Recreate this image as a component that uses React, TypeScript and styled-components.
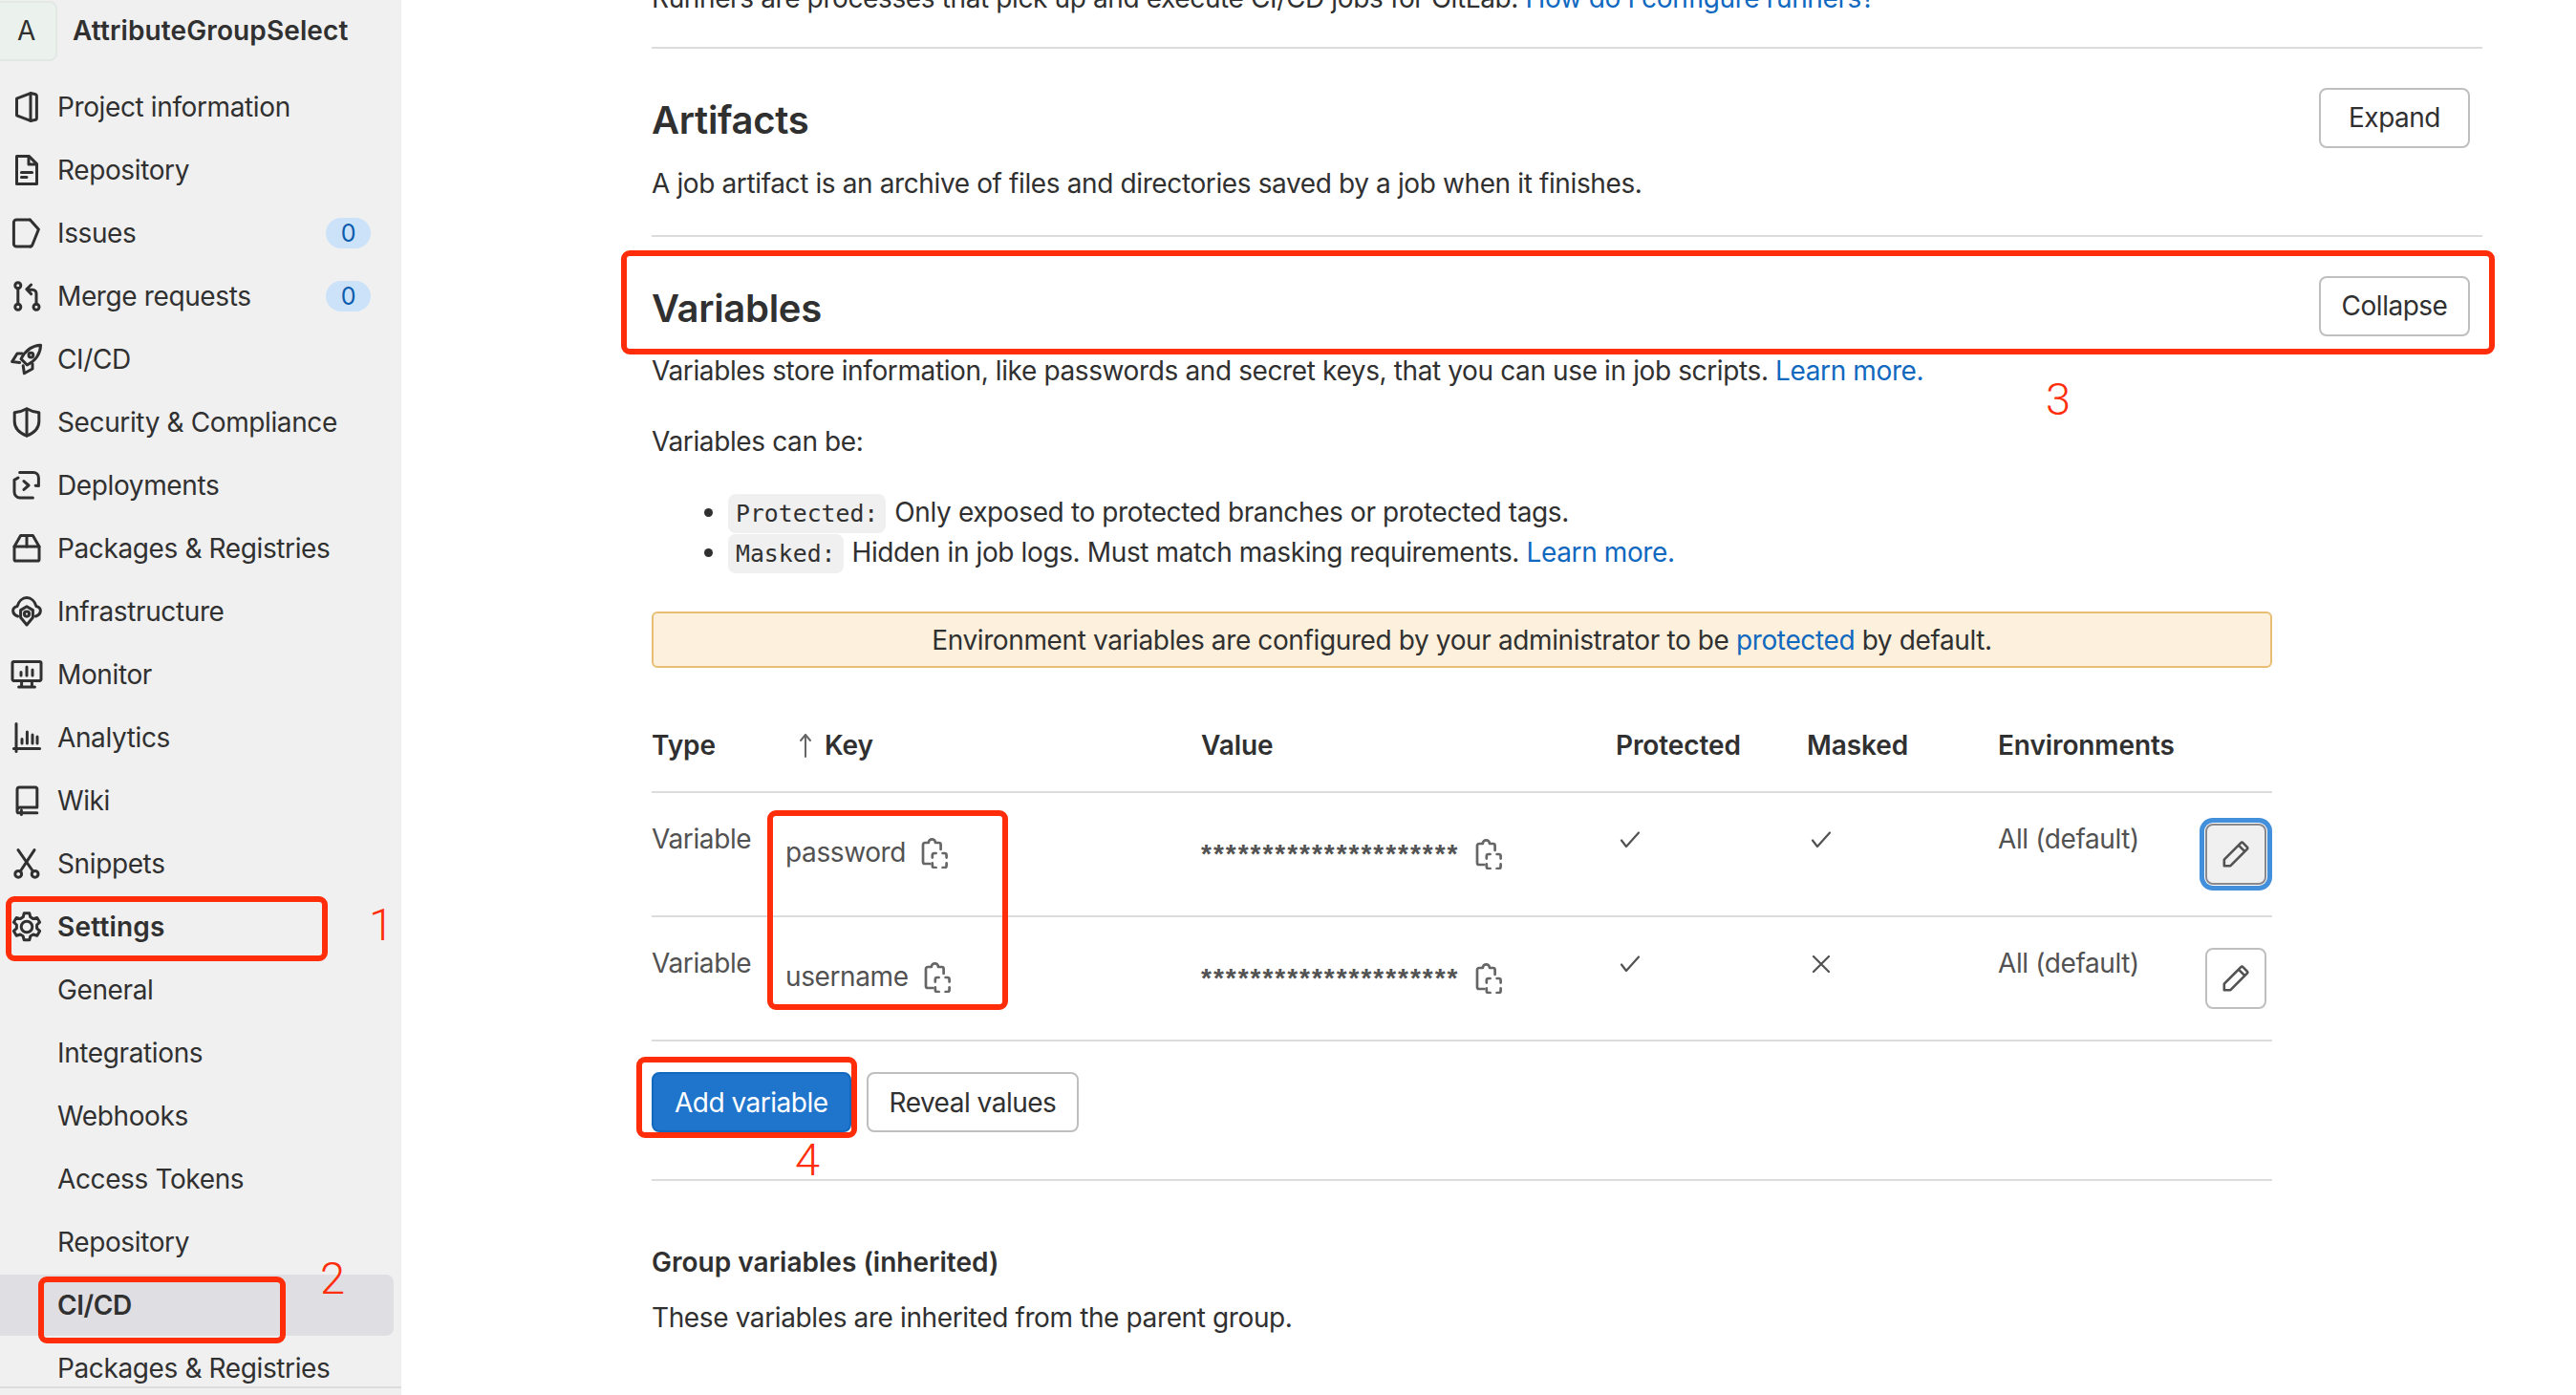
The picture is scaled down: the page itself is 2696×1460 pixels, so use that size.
import React from "react";
import styled, { createGlobalStyle } from "styled-components";

const Global = createGlobalStyle`
  html, body { margin: 0; padding: 0; background: #fff; }
  body { font-family: Inter, "Liberation Sans", sans-serif; color: #303030; font-size: 28px; letter-spacing: -0.38px; }
  * { box-sizing: border-box; }
`;

const Page = styled.div`
  position: relative; display: flex; width: 2696px; height: 1460px; overflow: hidden; background: #fff;
`;
const Sidebar = styled.aside`
  position: relative; flex: 0 0 420px; height: 1460px; overflow: hidden; background: #f0f0f0; line-height: 40px;
`;
const ProjectHeader = styled.div`
  display: flex; align-items: center; gap: 16px; height: 79px; padding-bottom: 15px;
`;
const Avatar = styled.div`
  display: flex; align-items: center; justify-content: center; width: 60px; height: 63px; padding-right: 3px;
  background: #ebf2ee; border: 2px solid #e2e8e4; border-left: 0; border-radius: 0 8px 8px 0; color: #303030;
`;
const ProjectName = styled.div`font-weight: 600; letter-spacing: 0.12px;`;
const NavItem = styled.div<{ $bold?: boolean }>`
  display: flex; align-items: center; height: 66px; padding: 0 32px 0 12px; gap: 16px;
  font-weight: ${(p) => (p.$bold ? 600 : 400)};
  letter-spacing: ${(p) => (p.$bold ? "0.2px" : "inherit")};
`;
const SubItem = styled.div<{ $active?: boolean }>`
  display: flex; align-items: center; height: ${(p) => (p.$active ? "64px" : "66px")};
  margin: ${(p) => (p.$active ? "1px 8px 1px 0" : "0")}; padding-left: 60px; border-radius: 0 8px 8px 0;
  background: ${(p) => (p.$active ? "#dfdee2" : "transparent")};
  font-weight: ${(p) => (p.$active ? 600 : 400)};
`;
const Badge = styled.span`
  margin-left: auto; width: 47px; height: 32px; border-radius: 16px; background: #cbe2f9; color: #0b5cad;
  display: flex; align-items: center; justify-content: center; font-size: 25px;
`;
const NavIcon = styled.svg`
  flex: 0 0 32px; width: 32px; height: 32px; fill: none; stroke: #303030; stroke-width: 1.5;
  stroke-linecap: round; stroke-linejoin: round; overflow: visible;
`;
const SidebarFoot = styled.div`
  position: absolute; left: 0; right: 0; bottom: 0; height: 9px; background: #f0f0f0; border-top: 2px solid #dcdcde;
`;
const Main = styled.main`
  flex: 1; min-width: 0; margin-top: -22px; padding-left: 262px; line-height: 40px;
`;
const Section = styled.section`
  width: 1916px; border-bottom: 2px solid #dcdcde;
`;
const ClippedIntro = styled(Section)`padding-bottom: 31px;`;
const Settings = styled(Section)`
  padding: 41px 0 34px;
`;
const Open = styled.section`
  width: 1916px; padding-top: 41px;
`;
const SectionHead = styled.div`
  display: flex; align-items: center; justify-content: space-between; padding-right: 13px; height: 62px;
`;
const Heading = styled.h4`
  margin: 0; font-size: 40px; font-weight: 600; letter-spacing: -0.3px; line-height: 48px; padding-top: 6px;
`;
const Para = styled.p<{ $top?: number }>`
  margin: ${(p) => p.$top ?? 18}px 0 0;
`;
const Link = styled.a`color: #1068bf;`;
const Button = styled.button<{ $primary?: boolean }>`
  display: inline-flex; align-items: center; justify-content: center; height: 63px;
  padding: 0 22px; font: inherit; letter-spacing: -0.5px;
  border-radius: 8px; border: 2px solid ${(p) => (p.$primary ? "#1068bf" : "#bfbfbf")};
  background: ${(p) => (p.$primary ? "#1f75cb" : "#fff")};
  color: ${(p) => (p.$primary ? "#fff" : "#303030")};
`;
const HeadButton = styled(Button)`width: 158px; padding: 0;`;
const Bullets = styled.ul`
  margin: 33px 0 0; padding: 0 0 0 80px; width: 1696px;
`;
const Bullet = styled.li`
  height: 42px; line-height: 42px;
`;
const Code = styled.code`
  font-family: "DejaVu Sans Mono", "Liberation Mono", monospace; font-size: 24.8px; letter-spacing: 0;
  background: #f0f0f0; border-radius: 8px; padding: 6px 8px; margin-right: 9px;
`;
const Alert = styled.div`
  width: 1696px; height: 59px; margin-top: 41px; display: flex; align-items: center; justify-content: center;
  background: #fdf1dd; border: 2px solid #e9be74; border-radius: 6px; 
`;
const Table = styled.div`width: 1696px; margin-top: 50px;`;
const Row = styled.div<{ $head?: boolean }>`
  display: grid; grid-template-columns: 140px 435px 434px 200px 200px 287px; align-items: start;
  height: ${(p) => (p.$head ? "81px" : "130px")}; border-bottom: 2px solid #dcdcde;
  color: ${(p) => (p.$head ? "#303030" : "#525252")};
  font-weight: ${(p) => (p.$head ? 600 : 400)};
  letter-spacing: ${(p) => (p.$head ? "-0.1px" : "inherit")};
  padding-top: ${(p) => (p.$head ? "11px" : "0")};
`;
const KeyHead = styled.div`display: flex; align-items: center; gap: 13px; padding-left: 14px;`;
const TextCell = styled.div`padding-top: 28px;`;
const CopyCell = styled.div<{ $value?: boolean }>`
  display: flex; align-items: ${(p) => (p.$value ? "flex-start" : "center")}; gap: ${(p) => (p.$value ? "16px" : "15px")};
  padding-top: ${(p) => (p.$value ? "48px" : "44px")};
`;
const KeyName = styled.span`margin-top: -2px;`;
const Stars = styled.span`
  font-family: "Liberation Sans", sans-serif; font-size: 28px; font-weight: 700; letter-spacing: 1.98px; line-height: 32px;
`;
const FlagCell = styled.div`padding: 40px 0 0 4px; line-height: 0;`;
const EnvCell = styled.div`display: flex; justify-content: space-between; padding: 28px 6px 0 0;`;
const EditButton = styled.button<{ $focus?: boolean }>`
  display: flex; align-items: center; justify-content: center; width: 64px; height: 64px; margin-top: 4px; padding: 0;
  border-radius: 8px; border: 2px solid ${(p) => (p.$focus ? "#89888d" : "#bfbfbf")};
  background: ${(p) => (p.$focus ? "#f0f0f0" : "#fff")};
  box-shadow: ${(p) => (p.$focus ? "0 0 0 1px #fff, 0 0 0 6px #428fdc" : "none")};
`;
const Actions = styled.div`
  display: flex; gap: 16px; width: 1696px; padding: 32px 0 49px; border-bottom: 2px solid #dcdcde;
`;
const SubHead = styled.div`margin-top: 65px; font-weight: 600; letter-spacing: 0.02px;`;
const RedBox = styled.div<{ $x: number; $y: number; $w: number; $h: number }>`
  position: absolute; left: ${(p) => p.$x}px; top: ${(p) => p.$y}px; width: ${(p) => p.$w}px; height: ${(p) => p.$h}px;
  border: 6px solid #ff2d0a; border-radius: 9px; pointer-events: none;
`;
const RedNum = styled.div<{ $x: number; $y: number }>`
  position: absolute; left: ${(p) => p.$x}px; top: ${(p) => p.$y}px; transform: translate(-50%, -50%);
  font-family: Roboto, "Liberation Sans", sans-serif; font-weight: 300; font-size: 47px; line-height: 47px; letter-spacing: 0; color: #ff2d0a;
`;
const GlyphIcon = styled.svg<{ $c?: string }>`
  fill: none; stroke: ${(p) => p.$c ?? "#525252"}; stroke-linecap: round; stroke-linejoin: round; display: block; flex: none;
`;

const I: React.FC<{ children: React.ReactNode }> = ({ children }) => <NavIcon viewBox="0 0 16 16">{children}</NavIcon>;

const icons: Record<string, React.ReactNode> = {
  info: <><path d="M2.750 3.600 10 .8l2.200.4a1.200 1.200 0 0 1 1 1.200v11.200a1.200 1.200 0 0 1-1 1.200l-2.200.4-7.250-2.800z" /><path d="M10 .9v14.200" /></>,
  repo: <><path d="M2.750.8h6.500l4 4v10.400H2.750z" /><path d="M9 1v4h4M5.200 9.200h5.600M5.200 11.800h2.800" /></>,
  issues: <><path d="M9.700 1H2.600A1.400 1.400 0 0 0 1.200 2.400v11.200A1.400 1.400 0 0 0 2.600 15h7.400" /><path d="M9.700 1 14.200 6 11 14a1.500 1.500 0 0 1-1 1" /></>,
  merge: <><circle cx="3.400" cy="2.400" r="1.500" /><circle cx="3.400" cy="13.600" r="1.500" /><circle cx="13" cy="13.600" r="1.500" /><path d="M3.400 3.900v8.200M13 12.100V6.600a2 2 0 0 0-2-2H8.400M10.300 2 7.900 4.400l2.400 2.400" /></>,
  rocket: <><path d="M15.300.6C10.500.8 7.400 3.200 5 7.800l3.200 3.200c4.600-2.400 6.900-5.600 7.100-10.400z" /><circle cx="10.200" cy="5.800" r="1.200" /><path d="M5.600 5H3L.3 9.300l4 .5M11 10.400V13l-4.300 2.400-.6-4" /></>,
  shield: <><path d="M8 .9c2 1.200 4.200 1.800 6.400 2v4.600c0 3.400-2.400 6-6.400 7.600-4-1.600-6.400-4.200-6.400-7.600V2.900C3.800 2.700 6 2.100 8 .9z" /><path d="M8 1v14" /></>,
  deploy: <><path d="M4.300 1.300h7.200a2.700 2.700 0 0 1 2.700 2.700v4.300M14.200 8.300l-1.600-.2M1.500 5.200v6.300a3 3 0 0 0 3 3h6.700M1.500 5.200l2-1.200M6.500 5.800 9 8l-2.500 2.200" /></>,
  pkg: <><path d="M1.500 7h13v6.700a.8.8 0 0 1-.8.8H2.300a.8.8 0 0 1-.8-.8z" /><path d="M1.500 7 4.800 1.300h6.400L14.500 7M8 1.300V7" /></>,
  infra: <><path d="M3.300 10.500C.1 9.400 0 5.900 3 5.300 3.800 2.500 5.800.8 8 .8s4.200 1.700 5 4.500c3 .6 2.900 4.100-.3 5.200" /><path d="M8 5.400l3.200 1.900v3.800L8 15l-3.200-3.900V7.300z" /><circle cx="8" cy="9.300" r="1.300" /></>,
  monitor: <><rect x=".5" y="1.200" width="15" height="10" rx=".8" /><path d="M5 8.500V6.800M8 8.500V4M11 8.500V5.500M5.300 11.500v2.500M10.700 11.500v2.500M3.800 14.500h8.400" /></>,
  analytics: <><path d="M2.500 .8v14.400M1.200 13.700h13.600M5.500 11V8.800M8.200 11V5M11 11V6.500M13.500 11V7.500" /></>,
  wiki: <><path d="M3 13V2.200A1.200 1.200 0 0 1 4.200 1h8.400a.8.800 0 0 1 .8.8V11.500H4.500A1.500 1.500 0 0 0 3 13v.6a.8.800 0 0 0 .8.800h9.600M5.200 13v2.200" /></>,
  snip: <><circle cx="3.600" cy="13.400" r="1.700" /><circle cx="12.300" cy="13.400" r="1.700" /><path d="M3.500.8 11.300 12M12 .8 4.600 12" /></>,
  gear: <><path d="M6.600.9h2.800l.5 2 1.500.9 2-.6 1.400 2.400-1.500 1.400v1.800l1.500 1.400-1.400 2.400-2-.6-1.500.9-.5 2H6.600l-.5-2-1.500-.9-2 .6-1.400-2.400 1.500-1.400V7L1.200 5.600l1.400-2.400 2 .6 1.500-.9z" /><circle cx="8" cy="8" r="2.900" /></>,
};

const Copy = () => (
  <GlyphIcon $c="#666" width="32" height="32" viewBox="0 0 16 16" strokeWidth={1.35}>
    <path d="M5.200 13.500H2.500a1 1 0 0 1-1-1V3.500a1 1 0 0 1 1-1h1.900c0-2.400 3.600-2.400 3.600 0h1.800a1 1 0 0 1 1 1V6" />
    <path d="M6.400 10.300V9a1 1 0 0 1 1-1h.9M11.800 8h1a1 1 0 0 1 1 1v1.300M13.800 13.200v1.300a1 1 0 0 1-1 1h-1M8.300 15.500h-.9a1 1 0 0 1-1-1v-1.300" />
  </GlyphIcon>
);
const Check = () => (
  <GlyphIcon width="22" height="18" viewBox="0 0 22 18" strokeWidth={2.2}>
    <path d="M2 9.500 7 16 20 1.500" />
  </GlyphIcon>
);
const Cross = () => (
  <GlyphIcon width="22" height="18" viewBox="0 0 22 18" strokeWidth={2.2}>
    <path d="M3 1l16 16M19 1 3 17" />
  </GlyphIcon>
);
const Pencil = () => (
  <GlyphIcon width="30" height="30" viewBox="0 0 16 16" strokeWidth={1.4}>
    <path d="M1.500 14.500V11L10.700 1.800a1 1 0 0 1 1.400 0l2.100 2.100a1 1 0 0 1 0 1.400L5 14.500zM9.500 3l3.500 3.500" />
  </GlyphIcon>
);
const SortUp = () => (
  <GlyphIcon $c="#666" width="14" height="26" viewBox="0 0 14 26" strokeWidth={2}>
    <path d="M7 25V2M2 8l5-6 5 6" />
  </GlyphIcon>
);

const nav: [string, string, boolean?][] = [
  ["Project information", "info"],
  ["Repository", "repo"],
  ["Issues", "issues", true],
  ["Merge requests", "merge", true],
  ["CI/CD", "rocket"],
  ["Security & Compliance", "shield"],
  ["Deployments", "deploy"],
  ["Packages & Registries", "pkg"],
  ["Infrastructure", "infra"],
  ["Monitor", "monitor"],
  ["Analytics", "analytics"],
  ["Wiki", "wiki"],
  ["Snippets", "snip"],
];
const sub = ["General", "Integrations", "Webhooks", "Access Tokens", "Repository", "CI/CD", "Packages & Registries"];

const rows = [
  { key: "password", masked: true, focus: true },
  { key: "username", masked: false, focus: false },
];

export default function App() {
  return (
    <Page>
      <Global />
      <Sidebar>
        <ProjectHeader>
          <Avatar>A</Avatar>
          <ProjectName>AttributeGroupSelect</ProjectName>
        </ProjectHeader>
        {nav.map(([label, icon, badge]) => (
          <NavItem key={label}>
            <I>{icons[icon]}</I>
            {label}
            {badge && <Badge>0</Badge>}
          </NavItem>
        ))}
        <NavItem $bold>
          <I>{icons.gear}</I>
          Settings
        </NavItem>
        {sub.map((s) => (
          <SubItem key={s} $active={s === "CI/CD"}>{s}</SubItem>
        ))}
        <SidebarFoot />
      </Sidebar>
      <Main>
        <ClippedIntro>
          Runners are processes that pick up and execute CI/CD jobs for GitLab. <Link>How do I configure runners?</Link>
        </ClippedIntro>
        <Settings>
          <SectionHead>
            <Heading>Artifacts</Heading>
            <HeadButton>Expand</HeadButton>
          </SectionHead>
          <Para>A job artifact is an archive of files and directories saved by a job when it finishes.</Para>
        </Settings>
        <Open>
          <SectionHead>
            <Heading>Variables</Heading>
            <HeadButton>Collapse</HeadButton>
          </SectionHead>
          <Para $top={17}>
            Variables store information, like passwords and secret keys, that you can use in job scripts. <Link>Learn more.</Link>
          </Para>
          <Para $top={34}>Variables can be:</Para>
          <Bullets>
            <Bullet><Code>Protected:</Code>Only exposed to protected branches or protected tags.</Bullet>
            <Bullet><Code>Masked:</Code>Hidden in job logs. Must match masking requirements. <Link>Learn more.</Link></Bullet>
          </Bullets>
          <Alert>
            <span>Environment variables are configured by your administrator to be <Link>protected</Link> by default.</span>
          </Alert>
          <Table>
            <Row $head>
              <div>Type</div>
              <KeyHead><SortUp />Key</KeyHead>
              <div>Value</div>
              <div>Protected</div>
              <div>Masked</div>
              <div>Environments</div>
            </Row>
            {rows.map((r) => (
              <Row key={r.key}>
                <TextCell>Variable</TextCell>
                <CopyCell><KeyName>{r.key}</KeyName><Copy /></CopyCell>
                <CopyCell $value><Stars>*********************</Stars><Copy /></CopyCell>
                <FlagCell><Check /></FlagCell>
                <FlagCell>{r.masked ? <Check /> : <Cross />}</FlagCell>
                <EnvCell>All (default)<EditButton $focus={r.focus}><Pencil /></EditButton></EnvCell>
              </Row>
            ))}
          </Table>
          <Actions>
            <Button $primary>Add variable</Button>
            <Button>Reveal values</Button>
          </Actions>
          <SubHead>Group variables (inherited)</SubHead>
          <Para $top={18}>These variables are inherited from the parent group.</Para>
        </Open>
      </Main>
      <RedBox $x={6} $y={938} $w={337} $h={68} />
      <RedBox $x={40} $y={1336} $w={259} $h={70} />
      <RedBox $x={650} $y={262} $w={1961} $h={109} />
      <RedBox $x={803} $y={848} $w={252} $h={209} />
      <RedBox $x={666} $y={1106} $w={231} $h={85} />
      <RedNum $x={399} $y={967}>1</RedNum>
      <RedNum $x={348} $y={1337}>2</RedNum>
      <RedNum $x={2154} $y={417}>3</RedNum>
      <RedNum $x={845} $y={1213}>4</RedNum>
    </Page>
  );
}
